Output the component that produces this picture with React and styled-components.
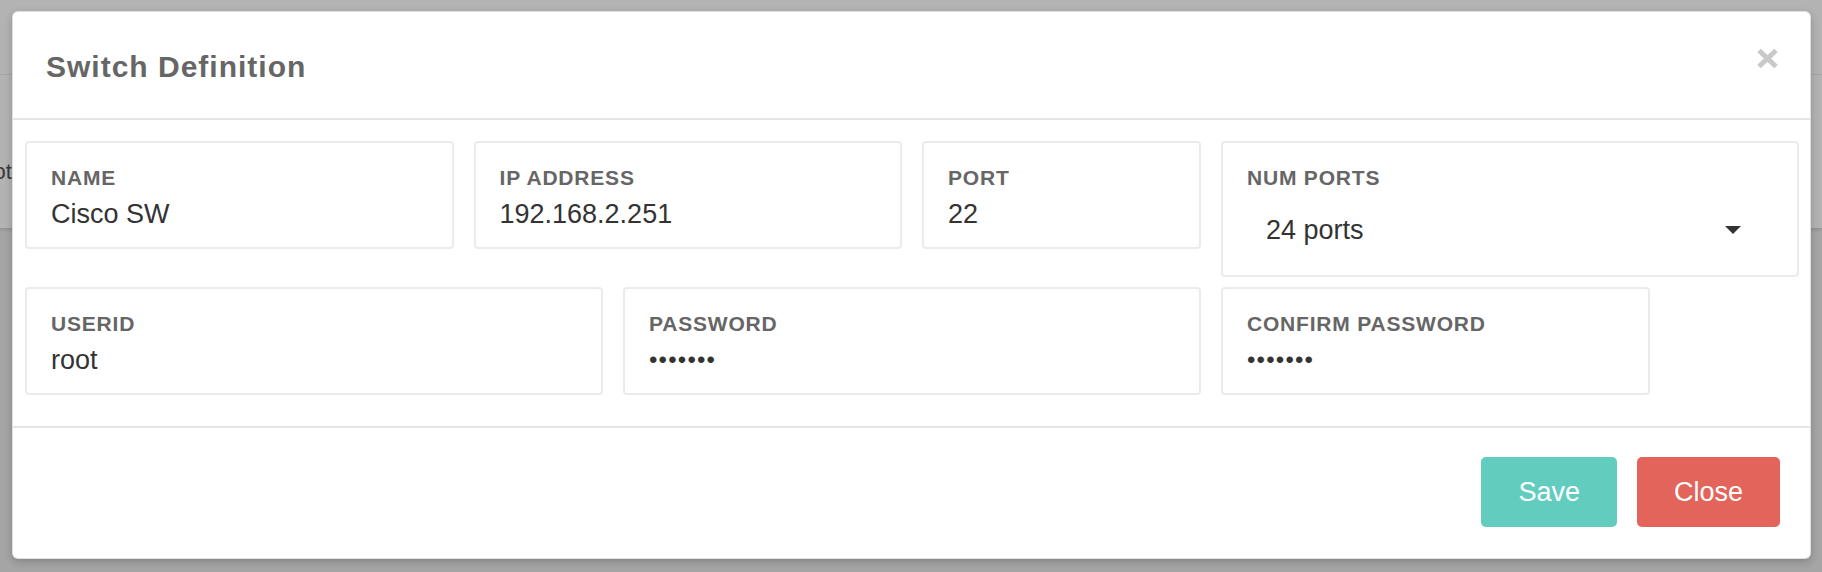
import styled, { createGlobalStyle } from 'styled-components'

const GlobalStyle = createGlobalStyle`
  html, body {
    margin: 0;
    padding: 0;
  }

  body {
    font-family: "Liberation Sans", Arial, sans-serif;
    background: #a5a5a5;
  }
`

const firstRow = [
  { label: 'NAME', value: 'Cisco SW', span: 3 },
  { label: 'IP ADDRESS', value: '192.168.2.251', span: 3 },
  { label: 'PORT', value: '22', span: 2 },
]

const secondRow = [
  { label: 'USERID', value: 'root', span: 4 },
  { label: 'PASSWORD', value: '•••••••', span: 4, secret: true },
  { label: 'CONFIRM PASSWORD', value: '•••••••', span: 3, secret: true },
]

function Field({ label, value, span, secret }) {
  return (
    <Card $span={span}>
      <Label>{label}</Label>
      {secret ? <SecretValue>{value}</SecretValue> : <Value>{value}</Value>}
    </Card>
  )
}

function App() {
  return (
    <>
      <GlobalStyle />
      <Page>
        <TopBar />
        <Panel>
          <PanelText>Snapshot</PanelText>
        </Panel>

        <Modal>
          <Header>
            <Title>Switch Definition</Title>
            <CloseIcon viewBox="0 0 21 19" aria-label="close">
              <path d="M2 1.5 L19 17.5 M19 1.5 L2 17.5" stroke="#c9c9c9" strokeWidth="5" />
            </CloseIcon>
          </Header>

          <Body>
            {firstRow.map((it) => <Field key={it.label} {...it} />)}
            <Card $span={4}>
              <Label>NUM PORTS</Label>
              <Select>
                <span>24 ports</span>
                <Caret />
              </Select>
            </Card>
            {secondRow.map((it) => <Field key={it.label} {...it} />)}
          </Body>

          <Footer>
            <Button $color="#62cdbe">Save</Button>
            <Button $color="#e3645a">Close</Button>
          </Footer>
        </Modal>
      </Page>
    </>
  )
}

export default App;

const Page = styled.div`
  position: relative;
  width: 1822px;
  height: 572px;
  overflow: hidden;
  background: #a5a5a5;
`

const TopBar = styled.div`
  height: 74px;
  background: #b3b3b3;
  border-bottom: 1px solid #a7a7a7;
`

const Panel = styled.div`
  height: 153px;
  background: #b3b3b3;
  box-shadow: 0 2px 3px rgba(0, 0, 0, 0.12);
  display: flex;
  align-items: flex-start;
  padding-top: 84px;
  box-sizing: border-box;
`

const PanelText = styled.span`
  margin-left: -81px;
  font-size: 22px;
  line-height: 26px;
  color: #3a3a3a;
`

const Modal = styled.div`
  position: absolute;
  top: 11px;
  left: 12px;
  width: 1799px;
  box-sizing: border-box;
  background: #fff;
  border: 1px solid rgba(0, 0, 0, 0.12);
  border-radius: 6px;
  box-shadow: 0 3px 9px rgba(0, 0, 0, 0.2);
  display: flex;
  flex-direction: column;
`

const Header = styled.div`
  display: flex;
  justify-content: space-between;
  align-items: flex-start;
  padding: 38px 32px 34px 33px;
  border-bottom: 2px solid #e5e5e5;
`

const Title = styled.h4`
  margin: 0;
  font-size: 30px;
  line-height: 34px;
  font-weight: bold;
  letter-spacing: 1px;
  color: #666;
`

const CloseIcon = styled.svg`
  width: 21px;
  height: 19px;
  margin-top: -1px;
`

const Body = styled.div`
  display: grid;
  grid-template-columns: repeat(12, 1fr);
  column-gap: 20px;
  row-gap: 10px;
  align-items: start;
  padding: 21px 11px 31px 12px;
  border-bottom: 2px solid #e5e5e5;
`

const Card = styled.div`
  grid-column: span ${(p) => p.$span};
  display: flex;
  flex-direction: column;
  padding: 23px 24px 18px;
  border: 2px solid #ebebeb;
  border-radius: 4px;
`

const Label = styled.div`
  font-size: 21px;
  line-height: 24px;
  font-weight: bold;
  letter-spacing: 0.8px;
  color: #666;
`

const Value = styled.div`
  margin-top: 9px;
  font-size: 27px;
  line-height: 30px;
  color: #333;
`

const SecretValue = styled(Value)`
  font-size: 24px;
  letter-spacing: 1.2px;
`

const Select = styled.div`
  display: flex;
  align-items: center;
  justify-content: space-between;
  height: 64px;
  margin: 8px 0 -5px;
  padding: 0 32px 0 19px;
  font-size: 27px;
  color: #333;
`

const Caret = styled.span`
  width: 0;
  height: 0;
  border-left: 8px solid transparent;
  border-right: 8px solid transparent;
  border-top: 8px solid #333;
`

const Footer = styled.div`
  display: flex;
  justify-content: flex-end;
  gap: 20px;
  padding: 29px 30px 31px;
`

const Button = styled.button`
  height: 70px;
  padding: 0 37px;
  border: none;
  border-radius: 5px;
  background: ${(p) => p.$color};
  color: #fff;
  font-family: "Liberation Sans", Arial, sans-serif;
  font-size: 27px;
  cursor: pointer;
`
